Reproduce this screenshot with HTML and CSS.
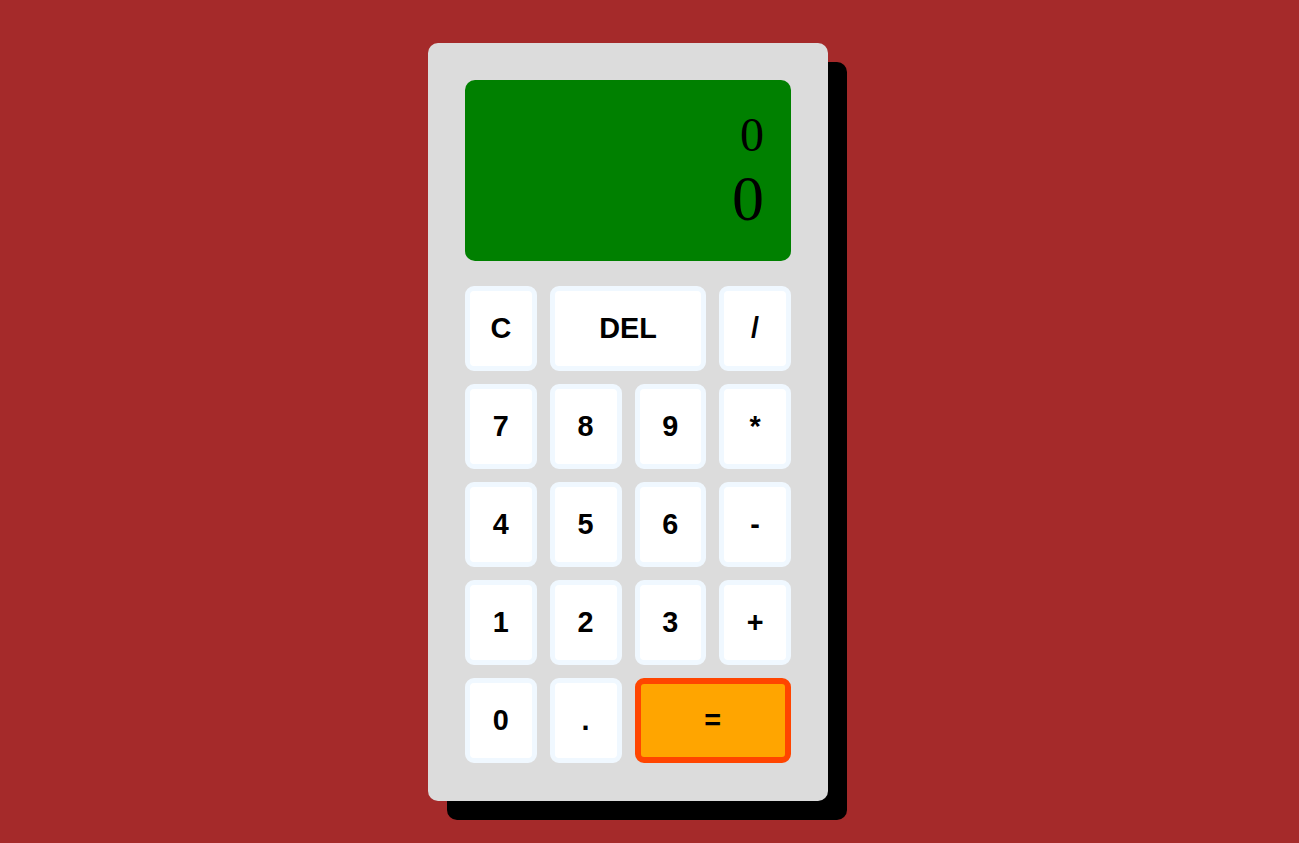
FILE: index.html
```html
<!DOCTYPE html>
<html lang="en">
<head>
<meta charset="utf-8">
<title>Calculator</title>
<link rel="stylesheet" href="styles.css">
</head>
<body>
<div class="calculator">
  <div class="display">
    <div class="previous">0</div>
    <div class="current">0</div>
  </div>
  <div class="keys">
    <button class="key">C</button>
    <button class="key span-two">DEL</button>
    <button class="key">/</button>
    <button class="key">7</button>
    <button class="key">8</button>
    <button class="key">9</button>
    <button class="key">*</button>
    <button class="key">4</button>
    <button class="key">5</button>
    <button class="key">6</button>
    <button class="key">-</button>
    <button class="key">1</button>
    <button class="key">2</button>
    <button class="key">3</button>
    <button class="key">+</button>
    <button class="key">0</button>
    <button class="key">.</button>
    <button class="key span-two equals">=</button>
  </div>
</div>
</body>
</html>
```

FILE: styles.css
```css
html, body {
  margin: 0;
  height: 100%;
}

body {
  background: #a52a2a;
  padding: 43px 0 0 428px;
  box-sizing: border-box;
  font-family: "Liberation Sans", Arial, sans-serif;
}

.calculator {
  width: 400px;
  height: 758px;
  box-sizing: border-box;
  padding: 37px;
  background: #dcdcdc;
  border-radius: 10px;
  box-shadow: 19px 19px 0 #000;
  display: flex;
  flex-direction: column;
  gap: 25px;
}

.display {
  height: 181px;
  background: #008000;
  border-radius: 10px;
  box-sizing: border-box;
  padding: 0 27px;
  display: flex;
  flex-direction: column;
  justify-content: center;
  align-items: flex-end;
  gap: 8px;
  font-family: "Liberation Serif", "Times New Roman", serif;
  color: #000;
}

.previous {
  font-size: 48px;
  line-height: 48px;
}

.current {
  font-size: 64px;
  line-height: 64px;
}

.keys {
  display: grid;
  grid-template-columns: repeat(4, 1fr);
  grid-auto-rows: 85px;
  gap: 13px;
}

.key {
  box-sizing: border-box;
  background: #fff;
  border: 5px solid #f0f8ff;
  border-radius: 9px;
  font-family: "Liberation Sans", Arial, sans-serif;
  font-weight: bold;
  font-size: 28.8px;
  color: #000;
  padding: 0;
  cursor: pointer;
}

.span-two {
  grid-column: span 2;
}

.equals {
  background: #ffa500;
  border: 6px solid #ff4500;
}
```
